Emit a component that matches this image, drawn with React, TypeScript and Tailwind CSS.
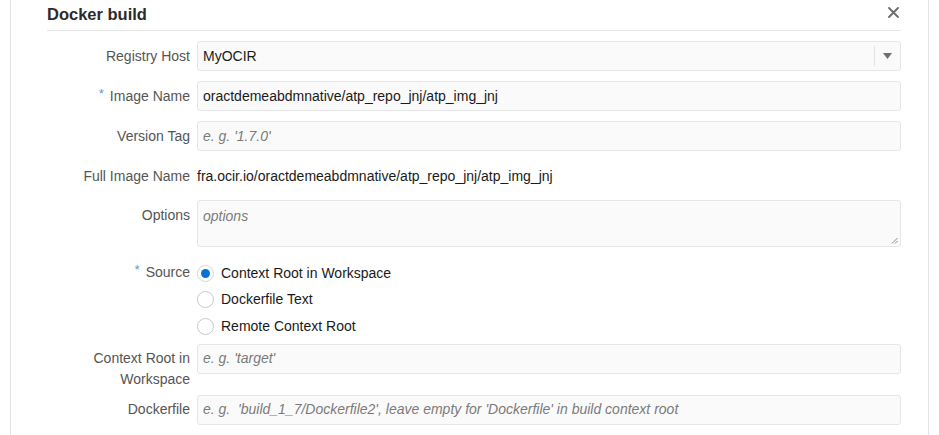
import React from "react";

const font = { fontFamily: '"Liberation Sans", Arial, sans-serif' };

function Label({ children, required }: { children: React.ReactNode; required?: boolean }) {
  return (
    <div className="w-[150px] shrink-0 pr-[7px] text-right text-[14px] leading-[21px] text-[#555]">
      {required && <span className="relative top-[-3px] mr-[6px] text-[13px] text-[#5b9bd1]">*</span>}
      {children}
    </div>
  );
}

function TextInput({ value, placeholder }: { value?: string; placeholder?: string }) {
  return (
    <div className="flex h-[30px] flex-1 items-center rounded-[3px] border border-[#e6e6e6] bg-[#fafafa] px-[5px] text-[14px]">
      {value ? (
        <span className="text-[#1a1a1a]">{value}</span>
      ) : (
        <span className="whitespace-pre italic text-[#7a7a7a]">{placeholder}</span>
      )}
    </div>
  );
}

function Radio({ checked, label }: { checked?: boolean; label: string }) {
  return (
    <div className="flex h-[26.5px] items-center">
      <div
        className={
          "flex h-[17px] w-[17px] items-center justify-center rounded-full border bg-white " +
          (checked ? "border-[#c9d9ea]" : "border-[#c8c8c8]")
        }
      >
        {checked && <div className="h-[9px] w-[9px] rounded-full bg-[#0a72d1]" />}
      </div>
      <span className="ml-[7px] text-[14px] text-[#1a1a1a]">{label}</span>
    </div>
  );
}

export default function App() {
  return (
    <div className="h-[435px] w-[939px] overflow-hidden bg-white" style={font}>
      <div className="ml-[10px] h-full w-[919px] border-x border-[#e3e3e3] pl-[36px] pr-[27px]">
        <div className="flex h-[31px] items-start justify-between border-b border-[#e6e6e6]">
          <div className="pt-[4px] text-[16.5px] font-bold leading-[20px] text-[#2b2b2b]">Docker build</div>
          <svg className="mr-[2px] mt-[7px]" width="11" height="11" viewBox="0 0 11 11">
            <path d="M1 1 L10 10 M10 1 L1 10" stroke="#6b6b6b" strokeWidth="1.8" strokeLinecap="round" />
          </svg>
        </div>

        <div className="mt-[10px] flex items-center">
          <Label>Registry Host</Label>
          <div className="flex h-[30px] flex-1 items-center rounded-[3px] border border-[#e6e6e6] bg-[#fafafa] pl-[5px] text-[14px]">
            <span className="flex-1 text-[#1a1a1a]">MyOCIR</span>
            <div className="h-[20px] w-px bg-[#e3e3e3]" />
            <div className="flex w-[25px] items-center justify-center">
              <svg width="9" height="6" viewBox="0 0 9 6">
                <path d="M0 0 L9 0 L4.5 6 Z" fill="#707070" />
              </svg>
            </div>
          </div>
        </div>

        <div className="mt-[10px] flex items-center">
          <Label required>Image Name</Label>
          <TextInput value="oractdemeabdmnative/atp_repo_jnj/atp_img_jnj" />
        </div>

        <div className="mt-[10px] flex items-center">
          <Label>Version Tag</Label>
          <TextInput placeholder="e. g. '1.7.0'" />
        </div>

        <div className="mt-[10px] flex h-[30px] items-center">
          <Label>Full Image Name</Label>
          <span className="text-[14px] text-[#1a1a1a]">fra.ocir.io/oractdemeabdmnative/atp_repo_jnj/atp_img_jnj</span>
        </div>

        <div className="mt-[9px] flex items-start">
          <div className="pt-[5px]">
            <Label>Options</Label>
          </div>
          <div className="relative h-[47px] flex-1 rounded-[3px] border border-[#e6e6e6] bg-[#fafafa] px-[5px] pt-[5px] text-[14px]">
            <span className="italic text-[#7a7a7a]">options</span>
            <svg className="absolute bottom-[2px] right-[2px]" width="7" height="7" viewBox="0 0 7 7">
              <path d="M1 6.5 L6.5 1 M4 6.5 L6.5 4" stroke="#8a8a8a" strokeWidth="1" />
            </svg>
          </div>
        </div>

        <div className="mt-[13px] flex items-start">
          <div className="pt-[2px]">
            <Label required>Source</Label>
          </div>
          <div className="flex flex-col">
            <Radio checked label="Context Root in Workspace" />
            <Radio label="Dockerfile Text" />
            <Radio label="Remote Context Root" />
          </div>
        </div>

        <div className="mt-[4px] flex items-start">
          <div className="pt-[4px]">
            <Label>
              Context Root in
              <br />
              Workspace
            </Label>
          </div>
          <TextInput placeholder="e. g. 'target'" />
        </div>

        <div className="mt-[5px] flex items-center">
          <Label>Dockerfile</Label>
          <TextInput placeholder="e. g.  'build_1_7/Dockerfile2', leave empty for 'Dockerfile' in build context root" />
        </div>
      </div>
    </div>
  );
}
